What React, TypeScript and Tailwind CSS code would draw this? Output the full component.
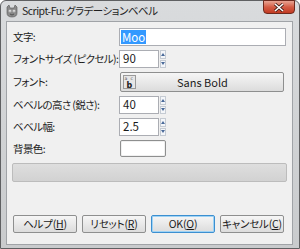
import React from "react";

const jp = "font-['Noto_Sans_CJK_JP','Noto_Sans',sans-serif] [font-feature-settings:'palt']";

function Spin({ value }: { value: string }) {
  return (
    <div className="flex items-center h-[18px]">
      <div className="w-[40px] h-full bg-white border border-[#abadb3] flex items-center pl-[3px] text-[11.5px] text-[#1a1a1a]">
        {value}
      </div>
      <div className="ml-[1px] w-[6px] h-full flex flex-col gap-[1px]">
        <div className="flex-1 bg-[#f4f6f9] border border-[#c5cbd3] flex items-center justify-center">
          <svg width="4" height="3" viewBox="0 0 4 3"><path d="M0 3 L2 0 L4 3 Z" fill="#4a6a99" /></svg>
        </div>
        <div className="flex-1 bg-[#f4f6f9] border border-[#c5cbd3] flex items-center justify-center">
          <svg width="4" height="3" viewBox="0 0 4 3"><path d="M0 0 L2 3 L4 0 Z" fill="#4a6a99" /></svg>
        </div>
      </div>
    </div>
  );
}

function Btn({ label, mn, def }: { label: string; mn: string; def?: boolean }) {
  return (
    <div
      className={`w-[64px] h-[18px] rounded-[2px] border flex items-center justify-center text-[10.5px] tracking-[-0.2px] whitespace-nowrap text-[#1a1a1a] bg-gradient-to-b from-[#f6f6f6] to-[#dcdcdc] ${
        def ? "border-[#3c8fd0] shadow-[inset_0_0_0_1px_#9fd3f5]" : "border-[#8e8f8f]"
      }`}
    >
      <span>
        {label}(<span className="underline">{mn}</span>)
      </span>
    </div>
  );
}

export default function App() {
  const rows: { label: string; el: React.ReactNode; h: string }[] = [
    {
      label: "文字:",
      h: "h-[18px]",
      el: (
        <div className="w-[167px] h-[18px] bg-white border border-[#abadb3] flex items-center pl-[1px]">
          <span className="bg-[#3399ff] text-white text-[11.5px] leading-[12px] px-[1px] py-[1px]">Moo</span>
        </div>
      ),
    },
    { label: "フォントサイズ (ピクセル):", h: "h-[18px]", el: <Spin value="90" /> },
    {
      label: "フォント:",
      h: "h-[20px]",
      el: (
        <div className="w-[164px] h-[20px] ml-[1px] rounded-[2px] border border-[#8e8f8f] bg-gradient-to-b from-[#f6f6f6] to-[#dcdcdc] flex items-center px-[2px]">
          <svg width="13" height="14" viewBox="0 0 13 14">
            <rect x="0.5" y="0.5" width="12" height="13" fill="#e6e6e6" stroke="#9a9a9a" />
            <text x="1.5" y="5" fontSize="4.5" fill="#555" fontFamily="DejaVu Sans">a</text>
            <text x="7.5" y="5" fontSize="4.5" fill="#555" fontFamily="DejaVu Sans">c</text>
            <text x="3.5" y="12.5" fontSize="8" fontWeight="bold" fill="#222" fontFamily="DejaVu Sans">b</text>
          </svg>
          <div className="flex-1 text-center text-[11px] text-[#1a1a1a] pr-[12px]">Sans Bold</div>
        </div>
      ),
    },
    { label: "ベベルの高さ (鋭さ):", h: "h-[18px]", el: <Spin value="40" /> },
    { label: "ベベル幅:", h: "h-[18px]", el: <Spin value="2.5" /> },
    {
      label: "背景色:",
      h: "h-[17px]",
      el: <div className="ml-[1px] w-[46px] h-[17px] rounded-[2px] border border-[#8e8f8f] bg-white shadow-[inset_0_0_0_1px_#f0f0f0]" />,
    },
  ];

  return (
    <div className={`w-[300px] h-[249px] bg-gradient-to-b from-[#d9dbdd] to-[#c9cbcd] border border-[#5f6062] rounded-t-[6px] flex flex-col ${jp}`}>
      <div className="h-[20px] flex items-center relative">
        <svg className="ml-[4px]" width="14" height="14" viewBox="0 0 14 14">
          <path d="M2 3 L4 1 L5 4 L9 4 L10 1 L12 3 L12 9 Q12 13 7 13 Q2 13 2 9 Z" fill="#8a8a8a" stroke="#555" strokeWidth="0.6" />
          <circle cx="5" cy="7" r="1.3" fill="#fff" />
          <circle cx="9" cy="7" r="1.3" fill="#fff" />
          <circle cx="5" cy="7" r="0.6" fill="#222" />
          <circle cx="9" cy="7" r="0.6" fill="#222" />
          <path d="M5 10 Q7 12 9 10" fill="none" stroke="#444" strokeWidth="0.8" />
        </svg>
        <span className="ml-[3px] text-[10.5px] tracking-[-0.5px] text-[#1e1e1e]">Script-Fu: グラデーションベベル</span>
        <div className="absolute right-[4px] top-[-1px] w-[32px] h-[14px] rounded-b-[4px] border border-[#6d2a1e] bg-gradient-to-b from-[#e7a493] via-[#d45c45] to-[#c23a22] flex items-center justify-center">
          <svg width="10" height="9" viewBox="0 0 10 9">
            <path d="M1 1 L9 8 M9 1 L1 8" stroke="#3a1a14" strokeWidth="3" />
            <path d="M1 1 L9 8 M9 1 L1 8" stroke="#ffffff" strokeWidth="1.6" />
          </svg>
        </div>
      </div>
      <div className="flex-1 ml-[5px] mr-[6px] mb-[3px] bg-[#f0f0f0] border border-[#a0a3a7] flex flex-col">
        <div className="mt-[6px] flex flex-col gap-[4px]">
          {rows.map((r) => (
            <div key={r.label} className={`flex items-center ${r.h}`}>
              <div className="w-[112px] pl-[6px] text-[10.5px] tracking-[-0.6px] text-[#1e1e1e] whitespace-nowrap">{r.label}</div>
              {r.el}
            </div>
          ))}
        </div>
        <div className="mt-[6px] ml-[5px] w-[275px] h-[19px] rounded-[2px] border border-[#bcbcbc] bg-gradient-to-b from-[#dedede] to-[#d2d2d2]" />
        <div className="mt-[33px] ml-[6px] flex gap-[5px]">
          <Btn label="ヘルプ" mn="H" />
          <Btn label="リセット" mn="R" />
          <Btn label="OK" mn="O" def />
          <Btn label="キャンセル" mn="C" />
        </div>
      </div>
    </div>
  );
}
